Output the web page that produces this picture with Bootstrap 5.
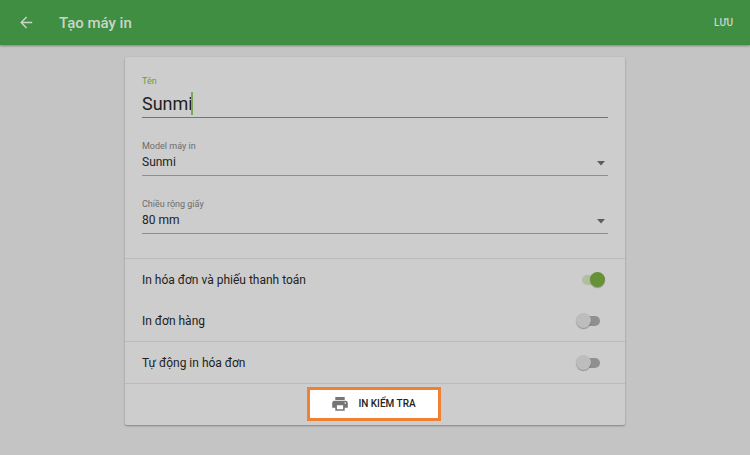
<!DOCTYPE html>
<html lang="vi">
<head>
<meta charset="utf-8">
<meta name="viewport" content="width=device-width, initial-scale=1">
<title>Tạo máy in</title>
<link href="https://cdn.jsdelivr.net/npm/bootstrap@5.3.0/dist/css/bootstrap.min.css" rel="stylesheet">
<style>
  body { font-family: Roboto, "Noto Sans", sans-serif; font-size: 12px; line-height: 16px; background: #c4c4c4; color: #222; }
  .topbar { height: 45px; padding: 0 17px 0 20px; background: #3f8e41; box-shadow: 0 1px 2px rgba(0,0,0,.35); color: #cbd5cb; }
  .topbar h1 { font-size: 15px; line-height: 20px; font-weight: 500; margin-left: 26px; }
  .topbar .btn { color: inherit; line-height: 16px; }
  .topbar .save { font-size: 10px; font-weight: 500; }
  .panel { width: calc(100% - 250px); min-width: 300px; margin: 12px auto 24px; background: #cdcdcd; border-radius: 2px; box-shadow: 0 1px 2px rgba(0,0,0,.35); }
  .fields { padding: 18px 17px 24px; gap: 22px; }
  .fields label { font-size: 9px; line-height: 12px; color: #6c6c6c; }
  .fields .name-label { color: #6b9c3c; }
  .fields .form-control, .fields .form-select { border: 0; border-bottom: 1px solid #8f8f8f; border-radius: 0; background-color: transparent; color: #222; padding: 0; box-shadow: none; }
  .fields .form-control { height: 31px; font-size: 18px; line-height: 24px; padding-top: 3px; border-bottom-color: #6f756f; }
  .fields .form-select { height: 24px; font-size: 12px; line-height: 16px; padding-bottom: 4px; background-image: none; }
  .caret { left: 49px; top: 5px; width: 2px; height: 23px; background: #7da556; }
  .arrow { right: 3px; top: 9px; pointer-events: none; }
  .group { border-top: 1px solid #bababa; }
  .option { height: 41px; padding: 0 25px 0 17px; }
  .toggle.form-check-input { width: 18px; height: 10px; margin: 0; border: 0; border-radius: 5px; background: #909090; position: relative; box-shadow: none; }
  .toggle::after { content: ""; position: absolute; left: -6px; top: -3px; width: 15px; height: 15px; border-radius: 50%; background: #bdbdbd; box-shadow: 0 1px 1px rgba(0,0,0,.3); }
  .toggle.form-check-input:checked { background: #afbf9f; }
  .toggle:checked::after { left: 8px; background: #659236; }
  .test-area { height: 42px; padding: 0 2px 2px 0; }
  .test.btn { width: 134px; height: 34px; border: 3px solid #f08033; border-radius: 0; background: #fff; color: #222; font-size: 10px; font-weight: 500; line-height: 16px; gap: 10px; }
</style>
</head>
<body>
<header class="topbar d-flex align-items-center">
  <button class="btn border-0 p-0 d-flex" type="button" aria-label="Quay lại">
    <svg width="13" height="13" viewBox="0 0 13 13" fill="none" stroke="currentColor" stroke-width="1.4"><path d="M12.200 6.500H1.500M6.600 1.100 1.200 6.500l5.400 5.400"/></svg>
  </button>
  <h1 class="mb-0">Tạo máy in</h1>
  <button class="btn border-0 p-0 ms-auto save" type="button">LƯU</button>
</header>
<main class="panel">
  <form>
    <div class="fields d-flex flex-column">
      <div>
        <label class="d-block name-label" for="name">Tên</label>
        <div class="position-relative">
          <input class="form-control" id="name" type="text" value="Sunmi">
          <span class="caret position-absolute"></span>
        </div>
      </div>
      <div>
        <label class="d-block" for="model">Model máy in</label>
        <div class="position-relative">
          <select class="form-select" id="model"><option>Sunmi</option></select>
          <svg class="arrow position-absolute" width="8" height="5" viewBox="0 0 8 5"><path d="M0 0h8L4 4.500z" fill="#5c5c5c"/></svg>
        </div>
      </div>
      <div>
        <label class="d-block" for="width">Chiều rộng giấy</label>
        <div class="position-relative">
          <select class="form-select" id="width"><option>80 mm</option></select>
          <svg class="arrow position-absolute" width="8" height="5" viewBox="0 0 8 5"><path d="M0 0h8L4 4.500z" fill="#5c5c5c"/></svg>
        </div>
      </div>
    </div>
    <div class="group">
      <div class="option d-flex align-items-center justify-content-between">
        <label for="bills">In hóa đơn và phiếu thanh toán</label>
        <input class="form-check-input toggle" type="checkbox" role="switch" id="bills" checked>
      </div>
      <div class="option d-flex align-items-center justify-content-between">
        <label for="orders">In đơn hàng</label>
        <input class="form-check-input toggle" type="checkbox" role="switch" id="orders">
      </div>
    </div>
    <div class="group">
      <div class="option d-flex align-items-center justify-content-between">
        <label for="auto">Tự động in hóa đơn</label>
        <input class="form-check-input toggle" type="checkbox" role="switch" id="auto">
      </div>
    </div>
    <div class="group test-area d-flex align-items-center justify-content-center">
      <button class="btn test p-0 d-flex align-items-center justify-content-center" type="button">
        <svg width="16" height="14" viewBox="0 0 16 14"><path fill="#757575" d="M3.300 0h9.400v2.900H3.300zM2.400 3.800h11.200A2.200 2.200 0 0 1 15.800 6v4.700h-3.100v3H3.300v-3H.2V6a2.200 2.200 0 0 1 2.200-2.200zM4.900 8.300v3.900h6.200V8.300zM13.300 5.200a.8.8 0 1 0 0 1.600.8.8 0 0 0 0-1.600z" fill-rule="evenodd"/></svg>
        <span>IN KIỂM TRA</span>
      </button>
    </div>
  </form>
</main>
<script src="https://cdn.jsdelivr.net/npm/bootstrap@5.3.0/dist/js/bootstrap.bundle.min.js"></script>
</body>
</html>
